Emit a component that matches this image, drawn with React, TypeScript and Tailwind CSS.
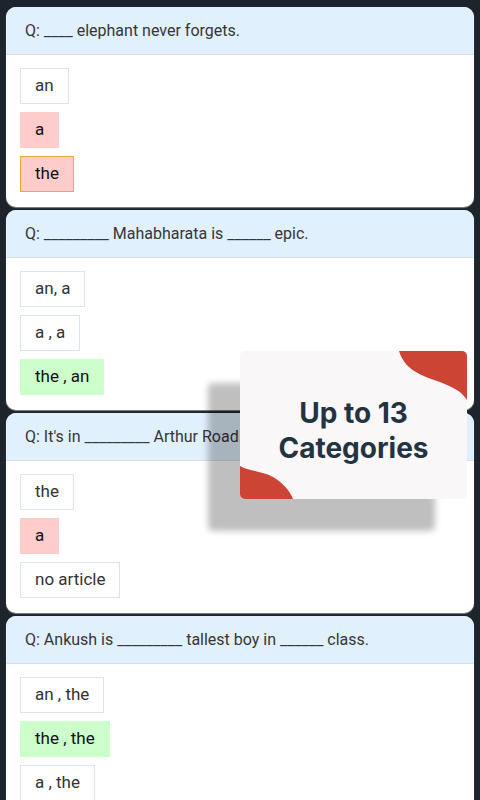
import React from "react";

type Opt = { label: string; kind?: "plain" | "wrong" | "picked" | "right" };
type Q = { q: string; opts: Opt[] };

const questions: Q[] = [
  {
    q: "Q: ____ elephant never forgets.",
    opts: [
      { label: "an" },
      { label: "a", kind: "wrong" },
      { label: "the", kind: "picked" },
    ],
  },
  {
    q: "Q: _________ Mahabharata is ______ epic.",
    opts: [{ label: "an, a" }, { label: "a , a" }, { label: "the , an", kind: "right" }],
  },
  {
    q: "Q: It's in _________ Arthur Road.",
    opts: [{ label: "the" }, { label: "a", kind: "wrong" }, { label: "no article" }],
  },
  {
    q: "Q: Ankush is _________ tallest boy in ______ class.",
    opts: [{ label: "an , the" }, { label: "the , the", kind: "right" }, { label: "a , the" }],
  },
];

function Option({ o }: { o: Opt }) {
  const k = o.kind ?? "plain";
  const cls =
    k === "plain"
      ? "bg-white border-[#dde3ea] text-[#333333]"
      : k === "wrong"
      ? "bg-[#ffcccc] border-[#ffcccc] text-[#111111]"
      : k === "picked"
      ? "bg-[#ffcccc] border-[#f2a93b] text-[#111111]"
      : "bg-[#ccffcc] border-[#ccffcc] text-[#111111]";
  return (
    <div className={`h-[36px] flex items-center px-[14px] border text-[17px] ${cls}`}>
      {o.label}
    </div>
  );
}

function Card({ q }: { q: Q }) {
  return (
    <div className="shrink-0 rounded-[10px] bg-white overflow-hidden shadow-[0_1px_1px_rgba(140,145,150,0.9)]">
      <div className="h-[48px] flex items-center px-[19px] bg-[#e1f0fd] border-b border-[#d6dfe7] text-[16px] text-[#363636] whitespace-nowrap overflow-hidden">
        {q.q}
      </div>
      <div className="flex flex-col items-start gap-[8px] px-[14px] pt-[13px] pb-[15px]">
        {q.opts.map((o, i) => (
          <Option key={i} o={o} />
        ))}
      </div>
    </div>
  );
}

export default function App() {
  return (
    <div
      className="relative w-[480px] h-[800px] overflow-hidden bg-[#1e242c]"
      style={{ fontFamily: "Roboto, 'Noto Sans', sans-serif" }}
    >
      <div className="flex flex-col gap-[3px] pt-[7px] px-[6px]">
        {questions.map((q, i) => (
          <Card key={i} q={q} />
        ))}
      </div>
      <div className="absolute left-[240px] top-[351px] w-[227px] h-[148px] rounded-[5px] overflow-hidden bg-[#f9f7f8] shadow-[-32px_32px_6px_rgba(0,0,0,0.25)] flex items-center justify-center">
        <svg className="absolute inset-0" width="227" height="148" viewBox="0 0 227 148">
          <path d="M159 0 C165 19 180 24 200 31 C215 37 222 41 227 49 L227 0 Z" fill="#cc4434" />
          <path d="M0 115 C8 120 22 120 33 126 C43 132 50 140 53 148 L0 148 Z" fill="#cc4434" />
        </svg>
        <div
          className="relative text-center font-bold text-[28px] leading-[35px] text-[#233342] mt-[12px]"
          style={{ fontFamily: "Inter, 'Noto Sans', sans-serif" }}
        >
          Up to 13
          <br />
          Categories
        </div>
      </div>
    </div>
  );
}
